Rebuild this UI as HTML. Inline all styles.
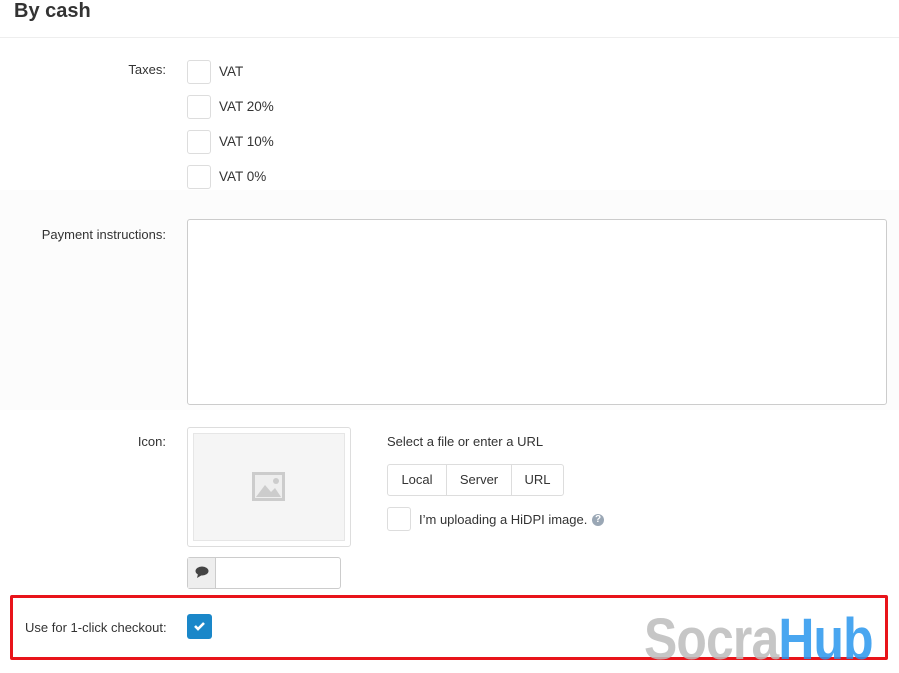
<!DOCTYPE html>
<html><head><style>
body{margin:0;width:899px;height:667px;background:#fff;font-family:"Liberation Sans",sans-serif;color:#333;position:relative;overflow:hidden}
.a{position:absolute}
.lbl{font-size:13px;color:#333;text-align:right;width:166px;left:0}
.cb{width:22px;height:22px;border:1px solid #ddd;border-radius:3px;background:#fff}
.t{font-size:13.5px;color:#333}
</style></head><body>
<div class="a" style="left:14px;top:0;font-size:20px;font-weight:bold;color:#333">By cash</div>
<div class="a" style="left:0;top:37px;width:899px;height:1px;background:#eee"></div>
<div class="a" style="left:0;top:190px;width:899px;height:220px;background:#fcfcfc"></div>
<div class="a lbl" style="top:62px">Taxes:</div>
<div class="a cb" style="left:187px;top:60px"></div><div class="a t" style="left:219px;top:64px">VAT</div>
<div class="a cb" style="left:187px;top:95px"></div><div class="a t" style="left:219px;top:99px">VAT 20%</div>
<div class="a cb" style="left:187px;top:130px"></div><div class="a t" style="left:219px;top:134px">VAT 10%</div>
<div class="a cb" style="left:187px;top:165px"></div><div class="a t" style="left:219px;top:169px">VAT 0%</div>
<div class="a lbl" style="top:227px">Payment instructions:</div>
<div class="a" style="left:187px;top:219px;width:698px;height:184px;border:1px solid #ccc;border-radius:3px;background:#fff"></div>
<div class="a lbl" style="top:434px">Icon:</div>
<div class="a" style="left:187px;top:427px;width:162px;height:118px;border:1px solid #ddd;border-radius:3px;background:#fff"></div>
<div class="a" style="left:193px;top:433px;width:150px;height:106px;border:1px solid #e6e6e6;background:#f5f5f5"></div>
<svg class="a" style="left:252px;top:472px" width="33" height="29" viewBox="0 0 33 29"><rect width="33" height="29" fill="#ccc"/><rect x="3" y="3" width="27" height="23" fill="#eee"/><path d="M4 25 L13 13 L19 20 L23 16 L29 25Z" fill="#ccc"/><circle cx="24" cy="9" r="3" fill="#ccc"/></svg>
<div class="a" style="left:187px;top:557px;width:152px;height:30px;border:1px solid #ccc;border-radius:3px;background:#fff"></div>
<div class="a" style="left:188px;top:558px;width:27px;height:30px;background:#eee;border-right:1px solid #ccc"></div>
<svg class="a" style="left:195px;top:566px" width="14" height="12" viewBox="0 0 14 12"><ellipse cx="7" cy="5" rx="6.5" ry="4.5" fill="#444"/><path d="M3 8 L2 12 L7 9Z" fill="#444"/></svg>
<div class="a" style="left:387px;top:434px;font-size:13px">Select a file or enter a URL</div>
<div class="a" style="left:387px;top:464px;width:175px;height:30px;border:1px solid #ddd;border-radius:3px;font-size:13px;display:flex">
<div style="width:58px;text-align:center;line-height:30px;border-right:1px solid #ddd">Local</div>
<div style="width:64px;text-align:center;line-height:30px;border-right:1px solid #ddd">Server</div>
<div style="flex:1;text-align:center;line-height:30px">URL</div></div>
<div class="a cb" style="left:387px;top:507px"></div>
<div class="a" style="left:419px;top:512px;font-size:13px">I’m uploading a HiDPI image.</div>
<div class="a" style="left:592px;top:514px;width:12px;height:12px;border-radius:50%;background:#9aa7b5;color:#fff;font-size:10px;font-weight:bold;text-align:center;line-height:12px">?</div>
<div class="a" style="left:10px;top:595px;width:872px;height:59px;border:3px solid #e8141a;border-radius:2px"></div>
<div class="a" style="left:25px;top:620px;font-size:13px">Use for 1-click checkout:</div>
<div class="a" style="left:187px;top:614px;width:25px;height:25px;border-radius:3px;background:#1a87c9"></div>
<svg class="a" style="left:193px;top:620px" width="13" height="12" viewBox="0 0 13 12"><path d="M2 6 L5 9 L11 3" stroke="#fff" stroke-width="2.6" fill="none"/></svg>
<div class="a" style="left:644px;top:606px;font-size:58px;font-weight:bold;letter-spacing:-1px;opacity:.85;transform:scaleX(0.86);transform-origin:0 0;white-space:nowrap"><span style="color:#bdbdbd">Socra</span><span style="color:#2a97ee">Hub</span></div>
</body></html>
